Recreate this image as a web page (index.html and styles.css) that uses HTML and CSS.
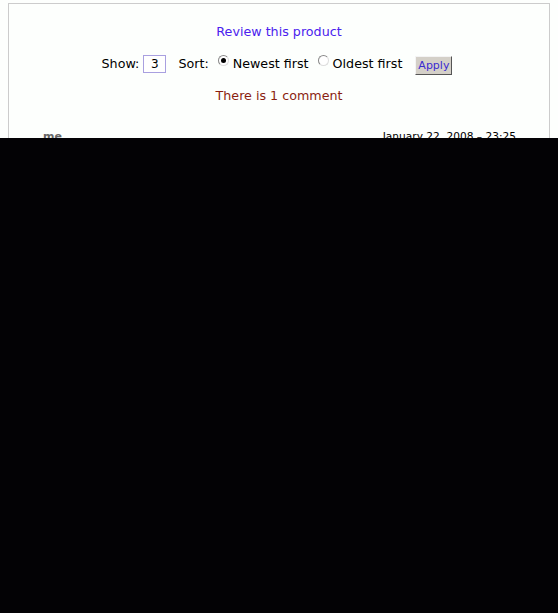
FILE: index.html
```html
<!DOCTYPE html>
<html>
<head>
<meta charset="utf-8">
<link rel="stylesheet" href="styles.css">
</head>
<body>
<div class="box">
  <div class="line"><a class="review" href="#">Review this product</a></div>
  <div class="line controls">
    <span class="label">Show:</span>
    <span class="num">3</span>
    <span class="label sort">Sort:</span>
    <span class="radio on"></span><span class="opt">Newest first</span>
    <span class="radio"></span><span class="opt">Oldest first</span>
    <span class="apply">Apply</span>
  </div>
  <div class="line count">There is 1 comment</div>
  <div class="comment-head">
    <span class="author">me</span>
    <span class="date">January 22, 2008 – 23:25</span>
  </div>
  <div class="comment-body">Nice product.</div>
</div>
<div class="cover"></div>
</body>
</html>
```
FILE: styles.css
```css
html, body {
  margin: 0;
  padding: 0;
  background: #fdfffd;
}
body {
  padding: 3px 8px 0 8px;
  font-family: "DejaVu Sans", Verdana, sans-serif;
  font-size: 12.7px;
  color: #000;
}
.box {
  border: 1px solid #cccccc;
  padding-top: 12px;
  min-height: 400px;
  background: #fdfffd;
}
.line {
  height: 32px;
  line-height: 32px;
  text-align: center;
}
.review {
  color: #4a22ee;
  text-decoration: none;
}
.controls {
  display: flex;
  justify-content: center;
  align-items: center;
  padding-right: 4px;
}
.label { margin-right: 4px; }
.sort { margin-left: 12px; margin-right: 9px; }
.num {
  display: inline-block;
  width: 21px;
  height: 16px;
  line-height: 16px;
  border: 1px solid #a9a0e0;
  background: #fff;
  text-align: center;
  font-size: 12px;
}
.radio {
  display: inline-block;
  width: 9px;
  height: 9px;
  border-radius: 50%;
  border: 1px solid #888;
  border-bottom-color: #ddd;
  border-right-color: #ddd;
  background: #fff;
  position: relative;
  top: -4px;
  margin-right: 4px;
}
.radio.on::after {
  content: "";
  position: absolute;
  left: 2px;
  top: 2px;
  width: 5px;
  height: 5px;
  border-radius: 50%;
  background: #000;
}
.opt { margin-right: 9px; }
.apply {
  display: inline-block;
  height: 17px;
  line-height: 17px;
  padding: 0 2px;
  font-size: 11px;
  color: #3a2ad0;
  background: #d4d0c8;
  border: 1px solid;
  border-color: #f4f4f4 #555 #555 #f4f4f4;
  margin-left: 4px;
  position: relative;
  top: 1px;
}
.count {
  color: #8a1e10;
}
.comment-head {
  display: flex;
  justify-content: space-between;
  align-items: baseline;
  padding: 18px 33px 0 34px;
}
.author {
  color: #666;
  font-weight: bold;
  font-size: 11px;
}
.date {
  font-size: 10.6px;
}
.comment-body {
  padding: 10px 34px;
}
.cover {
  position: absolute;
  left: 0;
  right: 0;
  top: 138px;
  bottom: 0;
  background: #030205;
}
```
